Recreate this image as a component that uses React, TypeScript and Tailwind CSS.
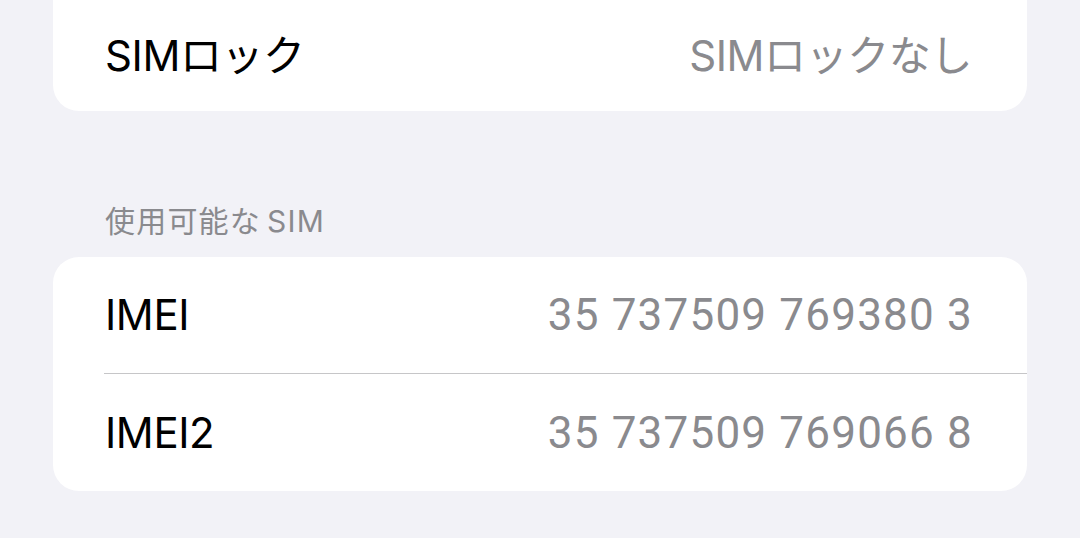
import React from 'react';

const font = { fontFamily: 'Inter, "Noto Sans CJK JP", sans-serif' };

function Row({ label, value, mono }: { label: string; value: string; mono?: boolean }) {
  return (
    <div className="flex items-center justify-between pl-[52px] pr-[55px] h-full">
      <span className="text-[42px] leading-none text-black tracking-[-0.01em]">{label}</span>
      <span
        className={
          mono
            ? 'text-[44px] leading-none text-[#8a8a8e] tracking-[1.2px] -mr-[1px]'
            : 'text-[42px] leading-none text-[#8a8a8e] tracking-[-0.01em]'
        }
        style={mono ? { fontFamily: 'Roboto, sans-serif' } : undefined}
      >
        {value}
      </span>
    </div>
  );
}

export default function App() {
  return (
    <div className="w-[1080px] h-[538px] bg-[#f2f2f7] px-[53px] overflow-hidden" style={font}>
      {/* SIM lock card (top cut off) */}
      <div className="bg-white rounded-b-[26px] h-[111px]">
        <Row label="SIMロック" value="SIMロックなし" />
      </div>

      {/* Section header */}
      <div className="pt-[92px] pb-[18px] pl-[52px]">
        <p className="text-[30px] leading-[36px] text-[#8a8a8e] tracking-[0.04em]">
          使用可能な<span className="ml-[6px]">SIM</span>
        </p>
      </div>

      {/* Available SIM card */}
      <div className="bg-white rounded-[26px]">
        <div className="h-[116px]">
          <Row label="IMEI" value="35 737509 769380 3" mono />
        </div>
        <div className="ml-[51px] h-px bg-[#c6c6c8]" />
        <div className="h-[117px]">
          <Row label="IMEI2" value="35 737509 769066 8" mono />
        </div>
      </div>
    </div>
  );
}
